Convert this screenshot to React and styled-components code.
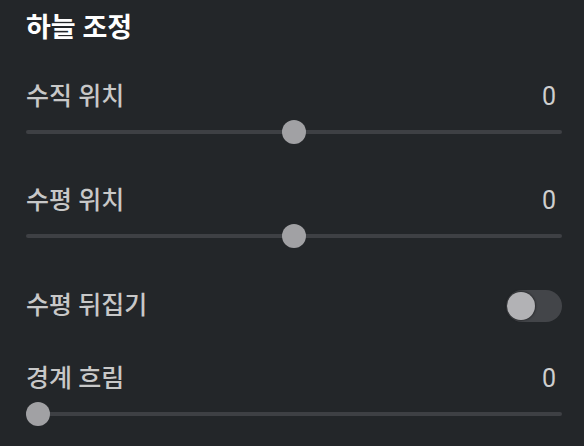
import React, { useState } from "react";
import styled, { createGlobalStyle } from "styled-components";

const GlobalStyle = createGlobalStyle`
  html, body {
    margin: 0;
    padding: 0;
    background: #232629;
  }
  body {
    font-family: "Roboto", "Noto Sans CJK KR", sans-serif;
  }
`;

const Panel = styled.div`
  width: 584px;
  height: 446px;
  box-sizing: border-box;
  padding: 12px 22px 0 26px;
  background: #232629;
  overflow: hidden;
`;

const Title = styled.h2`
  margin: 0 0 38px;
  font-size: 27px;
  line-height: 32px;
  font-weight: 700;
  color: #ffffff;
`;

const Controls = styled.div`
  display: flex;
  flex-direction: column;
  gap: 42px;
`;

const Control = styled.div`
  display: flex;
  flex-direction: column;
  gap: 8px;
`;

const Header = styled.div`
  display: flex;
  justify-content: space-between;
  align-items: center;
  height: 30px;
`;

const Label = styled.span`
  font-size: 25px;
  line-height: 30px;
  font-weight: 500;
  color: #c8c8c8;
`;

const Value = styled.span`
  font-size: 25px;
  line-height: 30px;
  color: #cfcfcf;
  padding-right: 6px;
`;

const SliderBox = styled.div`
  position: relative;
  height: 24px;
  display: flex;
  align-items: center;
`;

const Track = styled.div`
  width: 100%;
  height: 4px;
  border-radius: 2px;
  background: #3e4044;
`;

const Thumb = styled.div`
  position: absolute;
  top: 0;
  width: 24px;
  height: 24px;
  margin-left: -12px;
  border-radius: 50%;
  background: #a1a1a4;
`;

const ToggleRow = styled.div`
  display: flex;
  justify-content: space-between;
  align-items: center;
  height: 32px;
`;

const Switch = styled.button`
  position: relative;
  width: 56px;
  height: 32px;
  padding: 0;
  border: none;
  border-radius: 16px;
  background: ${(p) => (p.$on ? "#5b8def" : "#434549")};
  cursor: pointer;
`;

const Knob = styled.span`
  position: absolute;
  top: 2px;
  left: ${(p) => (p.$on ? "26px" : "1px")};
  width: 28px;
  height: 28px;
  border-radius: 50%;
  background: #b2b2b5;
  box-shadow: 0 0 2px 1px rgba(0, 0, 0, 0.35);
`;

const Slider = ({ label, value, min, max }) => {
  const pct = (value - min) / (max - min);
  return (
    <Control>
      <Header>
        <Label>{label}</Label>
        <Value>{value}</Value>
      </Header>
      <SliderBox>
        <Track />
        <Thumb style={{ left: `calc(12px + (100% - 24px) * ${pct})` }} />
      </SliderBox>
    </Control>
  );
};

export default function App() {
  const [flip, setFlip] = useState(false);
  return (
    <Panel>
      <GlobalStyle />
      <Title>하늘 조정</Title>
      <Controls>
        <Slider label="수직 위치" value={0} min={-100} max={100} />
        <Slider label="수평 위치" value={0} min={-100} max={100} />
        <ToggleRow>
          <Label>수평 뒤집기</Label>
          <Switch $on={flip} onClick={() => setFlip(!flip)}>
            <Knob $on={flip} />
          </Switch>
        </ToggleRow>
        <Slider label="경계 흐림" value={0} min={0} max={100} />
      </Controls>
    </Panel>
  );
}
